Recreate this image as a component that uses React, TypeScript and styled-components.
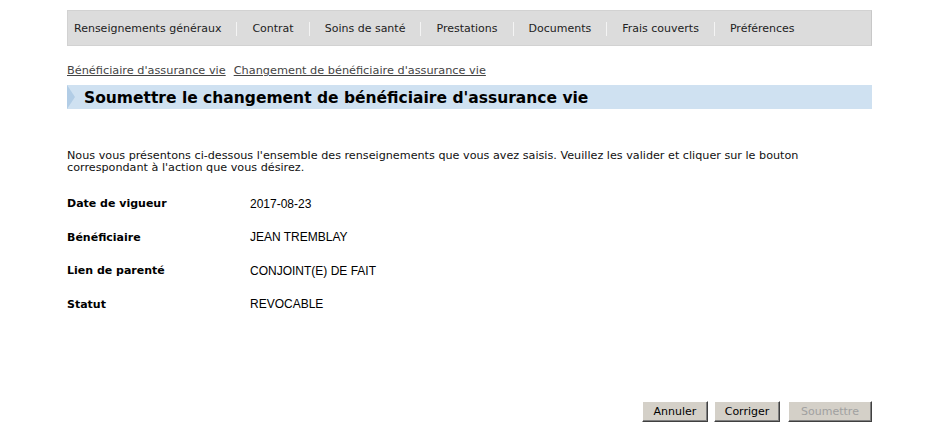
import React from "react";
import styled, { createGlobalStyle } from "styled-components";

const GlobalStyle = createGlobalStyle`
	body {
		margin: 0;
		background: #ffffff;
		font-family: "DejaVu Sans", Verdana, sans-serif;
		font-size: 11px;
		color: #000;
	}
`;

const navItems = [
	"Renseignements généraux",
	"Contrat",
	"Soins de santé",
	"Prestations",
	"Documents",
	"Frais couverts",
	"Préférences",
];

const details = [
	{ label: "Date de vigueur", value: "2017-08-23" },
	{ label: "Bénéficiaire", value: "JEAN TREMBLAY" },
	{ label: "Lien de parenté", value: "CONJOINT(E) DE FAIT" },
	{ label: "Statut", value: "REVOCABLE" },
];

const App = () => {
	return (
		<>
			<GlobalStyle />
			<Page>
				<NavBar>
					{navItems.map((item, i) => (
						<NavItem key={item} $last={i === navItems.length - 1}>
							{item}
						</NavItem>
					))}
				</NavBar>

				<Breadcrumb>
					<a href="#">Bénéficiaire d'assurance vie</a>
					<a href="#">Changement de bénéficiaire d'assurance vie</a>
				</Breadcrumb>

				<TitleBand>
					<Arrow />
					<Title>Soumettre le changement de bénéficiaire d'assurance vie</Title>
				</TitleBand>

				<Intro>
					Nous vous présentons ci-dessous l'ensemble des renseignements que vous avez saisis. Veuillez
					les valider et cliquer sur le bouton correspondant à l'action que vous désirez.
				</Intro>

				<DetailsGrid>
					{details.map((d) => (
						<React.Fragment key={d.label}>
							<Label>{d.label}</Label>
							<Value>{d.value}</Value>
						</React.Fragment>
					))}
				</DetailsGrid>

				<Actions>
					<Button $width={66}>Annuler</Button>
					<Button $width={66}>Corriger</Button>
					<Button $width={84} disabled>
						Soumettre
					</Button>
				</Actions>
			</Page>
		</>
	);
};

const Page = styled.div`
	width: 805px;
	margin: 10px 0 0 67px;
	display: flex;
	flex-direction: column;
`;

const NavBar = styled.nav`
	display: flex;
	align-items: center;
	box-sizing: border-box;
	height: 36px;
	padding-top: 1px;
	background: #dcdcdc;
	border: 1px solid #d2d2d2;
	border-right-color: #c8c8c8;
`;

const NavItem = styled.span<{ $last?: boolean }>`
	display: flex;
	align-items: center;
	padding: 0 15px;
	color: #222;
	white-space: nowrap;

	&:first-child {
		padding-left: 6px;
	}

	&::after {
		content: ${(p) => (p.$last ? "none" : '""')};
		display: block;
		width: 1px;
		height: 14px;
		margin-left: 15px;
		margin-right: -15px;
		background: #f4f4f4;
	}
`;

const Breadcrumb = styled.div`
	display: flex;
	gap: 8px;
	margin-top: 18px;
	line-height: 13px;
	font-size: 11.3px;

	a {
		color: #444;
		text-decoration: underline;
	}
`;

const TitleBand = styled.div`
	display: flex;
	align-items: center;
	height: 24px;
	margin-top: 8px;
	background: #cfe1f1;
`;

const Arrow = styled.div`
	width: 0;
	height: 0;
	border-top: 12px solid transparent;
	border-bottom: 12px solid transparent;
	border-left: 8px solid #b2cde6;
`;

const Title = styled.h1`
	margin: 2px 0 0 9px;
	font-size: 15.5px;
	font-weight: bold;
	color: #000;
`;

const Intro = styled.p`
	max-width: 745px;
	margin: 41px 0 0;
	font-size: 11.2px;
	line-height: 12px;
	color: #111;
`;

const DetailsGrid = styled.div`
	display: grid;
	grid-template-columns: 183px 1fr;
	grid-auto-rows: 33.5px;
	align-items: center;
	margin-top: 13px;
`;

const Label = styled.div`
	font-weight: bold;
`;

const Value = styled.div`
	font-family: "Liberation Sans", Arial, sans-serif;
	font-size: 12px;
`;

const Actions = styled.div`
	display: flex;
	justify-content: flex-end;
	gap: 6px;
	margin-top: 80px;

	& > :last-child {
		margin-left: 2px;
	}
`;

const Button = styled.button<{ $width: number }>`
	width: ${(p) => p.$width}px;
	height: 21px;
	padding: 0;
	font-family: "DejaVu Sans", Verdana, sans-serif;
	font-size: 11px;
	color: #000;
	background: #d4d0c8;
	border: 1px solid;
	border-color: #ffffff #404040 #404040 #ffffff;
	box-shadow: inset -1px -1px 0 #808080;

	&:disabled {
		color: #a0a0a0;
	}
`;

export default App;
